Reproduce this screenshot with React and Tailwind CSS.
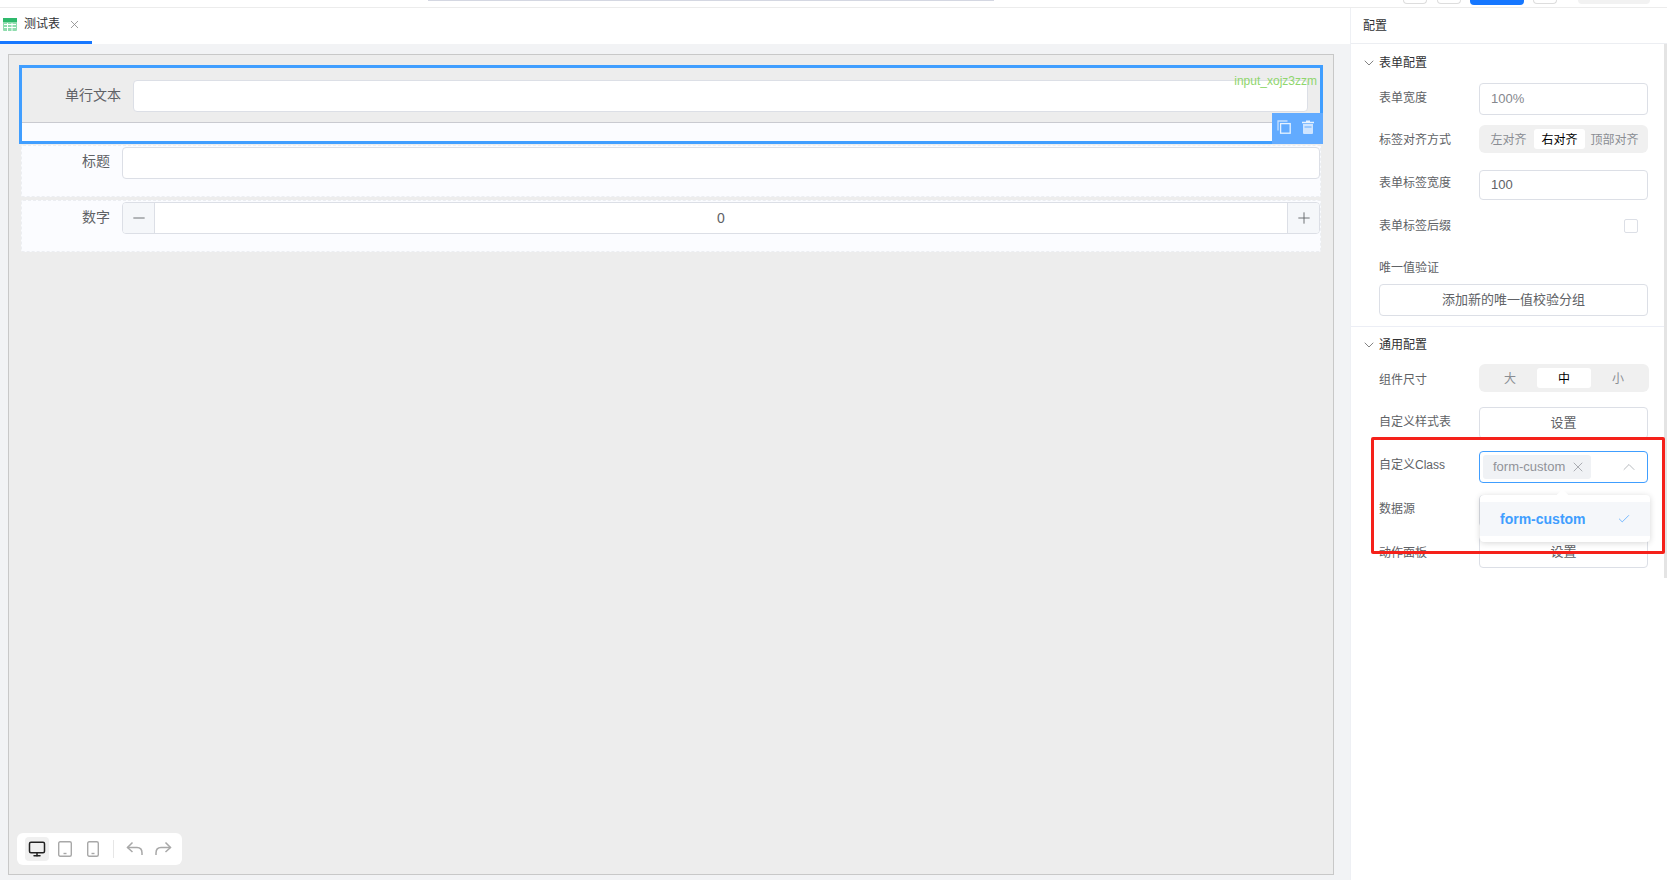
import { ChevronDown, ChevronUp, Check, X, Plus, Minus, Monitor } from "lucide-react";

const font = "font-['Liberation_Sans','Noto_Sans_CJK_SC',sans-serif]";

function SheetIcon() {
  return (
    <svg width="14" height="13" viewBox="0 0 14 13" className="shrink-0">
      <rect x="0" y="0" width="14" height="13" rx="1" fill="#8fdcae" />
      <rect x="0" y="0" width="14" height="4" fill="#2fb96c" />
      <path d="M1 6.5h12M1 9.5h12M4.5 5v8M9 5v8" stroke="#fff" strokeWidth="1" />
    </svg>
  );
}

function CopyIcon() {
  return (
    <svg width="14" height="14" viewBox="0 0 14 14" fill="none" stroke="#e6f2ff" strokeWidth="1.3">
      <rect x="3.6" y="3.6" width="9.6" height="9.6" />
      <path d="M1 10.5V1h9.5" opacity="0.75" />
    </svg>
  );
}

function TrashIcon() {
  return (
    <svg width="12" height="14" viewBox="0 0 12 14">
      <path d="M4 0.5h4v1.2h4v1.5H0V1.7h4z" fill="#e6f2ff" />
      <path d="M1 4h10v9a1 1 0 0 1-1 1H2a1 1 0 0 1-1-1z" fill="#cfe5ff" />
      <path d="M2.5 7h7" stroke="#62abff" strokeWidth="1" />
    </svg>
  );
}

function DeviceIcon({ w, className = "" }) {
  return (
    <svg width={w} height="16" viewBox={`0 0 ${w} 16`} fill="none" stroke="#a8a8a8" strokeWidth="1.4" className={className}>
      <rect x="0.7" y="0.7" width={w - 1.4} height="14.6" rx="1.5" />
      <path d={`M${w / 2 - 1.5} 12.5h3`} />
    </svg>
  );
}

function UndoIcon({ flip, className = "" }) {
  return (
    <svg width="18" height="16" viewBox="0 0 18 16" fill="none" stroke="#a8a8a8" strokeWidth="1.5" className={`${flip ? "-scale-x-100" : ""} ${className}`}>
      <path d="M6.5 1.5 1.5 6.5l5 4.5" />
      <path d="M1.5 6.5H11c3.2 0 5 2.2 5 5.5v2" />
    </svg>
  );
}

function Row({ label, className = "", labelClass = "", children }) {
  return (
    <div className={`flex items-center pl-[28px] pr-[19px] ${className}`}>
      <span className={`w-[100px] shrink-0 text-[12px] text-[#606266] ${labelClass}`}>{label}</span>
      <div className="flex-1">{children}</div>
    </div>
  );
}

function Field({ value, h = "h-[32px]", muted }) {
  return (
    <div className={`${h} flex items-center rounded border border-[#dcdfe6] bg-white px-[11px] text-[13px] ${muted ? "text-[#85888e]" : "text-[#606266]"}`}>
      {value}
    </div>
  );
}

function Segmented({ items, active, cols }) {
  return (
    <div className={`grid h-[28px] items-center rounded-[6px] bg-[#f0f0f0] px-[4px] ${cols}`}>
      {items.map((item) => (
        <span
          key={item}
          className={`flex h-[20px] items-center justify-center rounded-[3px] pt-[2px] text-[12px] whitespace-nowrap ${item === active ? "bg-white text-black" : "text-[#8a8d93]"}`}
        >
          {item}
        </span>
      ))}
    </div>
  );
}

function SectionTitle({ title, className = "" }) {
  return (
    <div className={`flex h-[20px] items-center pl-[10px] text-[12px] text-[#303133] ${className}`}>
      <ChevronDown size={16} strokeWidth={1.1} className="mr-[2px] text-[#555]" />
      {title}
    </div>
  );
}

function CanvasRow({ label, className = "", labelClass = "", children }) {
  return (
    <div className={`mx-[2px] h-[52px] rounded-[2px] border border-dashed border-[#eceef2] bg-[#fbfcff] pt-px ${className}`}>
      <div className="flex items-start">
        <span className={`w-[88px] text-right text-[14px] leading-[24px] text-[#606266] ${labelClass}`}>{label}</span>
        <div className="ml-[12px] flex-1">{children}</div>
      </div>
    </div>
  );
}

export default function App() {
  return (
    <div className={`flex h-[880px] w-[1667px] flex-col overflow-hidden bg-white ${font}`}>
      {/* cropped top toolbar */}
      <div className="relative h-[8px] shrink-0 border-b border-[#ececec]">
        <div className="absolute top-0 left-[428px] h-px w-[566px] bg-[#d4d7e2]" />
        <div className="absolute top-0 left-[1403px] h-[4px] w-[24px] rounded-b border border-t-0 border-[#ddd]" />
        <div className="absolute top-0 left-[1437px] h-[4px] w-[24px] rounded-b border border-t-0 border-[#ddd]" />
        <div className="absolute top-0 left-[1470px] h-[5px] w-[54px] rounded-b bg-[#1677ff]" />
        <div className="absolute top-0 left-[1533px] h-[4px] w-[24px] rounded-b border border-t-0 border-[#ddd]" />
        <div className="absolute top-0 left-[1578px] h-[4px] w-[72px] rounded-b bg-[#f2f2f2]" />
      </div>

      <div className="flex min-h-0 flex-1">
        {/* left: tab + canvas */}
        <div className="flex min-w-0 flex-1 flex-col">
          <div className="h-[36px] shrink-0 bg-white">
            <div className="flex h-[36px] w-[92px] items-center border-b-[3px] border-[#1677ff] pb-px pl-[3px]">
              <SheetIcon />
              <span className="ml-[7px] text-[12px] text-[#303133]">测试表</span>
              <X size={13} strokeWidth={1.5} className="ml-[8px] text-[#888]" />
            </div>
          </div>
          <div className="flex min-h-0 flex-1 flex-col bg-[#f2f3f5] pt-[10px] pr-[16px] pb-[5px] pl-[8px]">
            <div className="relative flex-1 border border-[#c8c8c8] bg-[#ededed] px-[10px] pt-[10px]">
              {/* selected field */}
              <div className="relative h-[79px] border-[3px] border-[#409eff]">
                <div className="flex h-[55px] border-b border-[#c9cad0] bg-[#ededed] pt-[12px] pr-[12px]">
                  <span className="w-[99px] pt-[3px] text-right text-[14px] leading-[24px] text-[#606266]">单行文本</span>
                  <div className="ml-[12px] h-[32px] flex-1 rounded border border-[#dcdfe6] bg-white" />
                </div>
                <div className="h-[18px] bg-[#fbfcff]" />
                <span className="absolute top-[6px] right-[3px] text-[12px] leading-[14px] text-[#8fd66d]">input_xojz3zzm</span>
                <div className="absolute right-[-3px] bottom-[-3px] flex h-[31px] w-[51px] items-start gap-[11px] bg-[#62abff] pt-[7px] pl-[5px]">
                  <CopyIcon />
                  <TrashIcon />
                </div>
              </div>

              <CanvasRow label="标题" className="mt-px" labelClass="pt-[2px]">
                <div className="h-[32px] rounded border border-[#dcdfe6] bg-white" />
              </CanvasRow>
              <CanvasRow label="数字" className="mt-[3px]" labelClass="pt-[3px]">
                <div className="flex h-[32px] overflow-hidden rounded border border-[#dcdfe6] bg-white text-[#606266]">
                  <span className="flex w-[32px] items-center justify-center border-r border-[#dcdfe6] bg-[#f5f7fa]">
                    <Minus size={18} strokeWidth={1.2} />
                  </span>
                  <span className="flex flex-1 items-center justify-center text-[14px]">0</span>
                  <span className="flex w-[32px] items-center justify-center border-l border-[#dcdfe6] bg-[#f5f7fa]">
                    <Plus size={18} strokeWidth={1.2} />
                  </span>
                </div>
              </CanvasRow>

              {/* device toolbar */}
              <div className="absolute bottom-[9px] left-[8px] flex h-[32px] w-[165px] items-center rounded-[6px] bg-white pl-[8px]">
                <span className="flex h-[24px] w-[24px] items-center justify-center rounded-[4px] bg-[#f0f0f0] text-[#222]">
                  <Monitor size={18} strokeWidth={2} />
                </span>
                <DeviceIcon w={14} className="ml-[9px]" />
                <DeviceIcon w={12} className="ml-[15px]" />
                <span className="mr-[12px] ml-[14px] h-[18px] w-px bg-[#e6e6e6]" />
                <UndoIcon />
                <UndoIcon flip className="ml-[10px]" />
              </div>
            </div>
          </div>
        </div>

        {/* right: config panel */}
        <div className="relative w-[317px] shrink-0 border-l border-[#eef0f4] bg-white">
          <div className="flex h-[36px] items-center border-b border-[#eceef2] pl-[12px] text-[12px] text-[#303133]">配置</div>
          <div className="absolute top-[36px] right-0 h-[534px] w-[3px] bg-[#e4e4e4]" />

          <SectionTitle title="表单配置" className="mt-[9px]" />
          <Row label="表单宽度" className="mt-[10px]" labelClass="pb-[2px]">
            <Field value="100%" muted />
          </Row>
          <Row label="标签对齐方式" className="mt-[10px]" labelClass="pt-[2px]">
            <Segmented items={["左对齐", "右对齐", "顶部对齐"]} active="右对齐" cols="grid-cols-[51px_51px_59px]" />
          </Row>
          <Row label="表单标签宽度" className="mt-[17px]" labelClass="pb-[4px]">
            <Field value="100" h="h-[30px]" />
          </Row>
          <div className="mt-[19px] flex h-[14px] items-center pr-[29px] pl-[28px]">
            <span className="flex-1 text-[12px] text-[#606266]">表单标签后缀</span>
            <span className="h-[14px] w-[14px] rounded-[2px] border border-[#dcdfe6]" />
          </div>
          <div className="mt-[27px] pl-[28px] text-[12px] leading-[16px] text-[#606266]">唯一值验证</div>
          <div className="mt-[8px] mr-[19px] ml-[28px] flex h-[32px] items-center justify-center rounded border border-[#dcdfe6] text-[13px] text-[#606266]">
            添加新的唯一值校验分组
          </div>
          <div className="mt-[10px] h-px bg-[#eceef5]" />

          <SectionTitle title="通用配置" className="mt-[8px]" />
          <Row label="组件尺寸" className="mt-[9px]" labelClass="pt-[4px]">
            <Segmented items={["大", "中", "小"]} active="中" cols="grid-cols-[54px_54px_54px]" />
          </Row>
          <Row label="自定义样式表" className="mt-[15px]" labelClass="pb-[3px]">
            <div className="flex h-[32px] items-center justify-center rounded border border-[#dcdfe6] text-[13px] text-[#606266]">设置</div>
          </Row>
          <Row label="自定义Class" className="mt-[12px]" labelClass="pb-[4px]">
            <div className="flex h-[32px] items-center rounded border border-[#409eff] pr-[8px] pl-[3px]">
              <span className="flex h-[24px] items-center rounded-[3px] bg-[#f0f2f5] pr-[5px] pl-[10px] text-[13px] text-[#909399]">
                form-custom
                <X size={16} strokeWidth={1.1} className="ml-[5px]" />
              </span>
              <ChevronUp size={20} strokeWidth={1.1} className="ml-auto text-[#b0b3b8]" />
            </div>
          </Row>
          <Row label="数据源" className="mt-[12px]" labelClass="pb-[4px]">
            <div className="h-[32px] rounded border border-[#dcdfe6]" />
          </Row>
          <Row label="动作面板" className="mt-[9px]" labelClass="pt-[2px]">
            <div className="flex h-[32px] items-center justify-center rounded border border-[#dcdfe6] text-[13px] text-[#606266]">设置</div>
          </Row>

          {/* dropdown popup */}
          <div className="absolute top-[487px] left-[129px] h-[47px] w-[170px] rounded-[4px] bg-white pt-[7px] shadow-[0_1px_6px_rgba(0,0,0,0.16)]">
            <div className="absolute top-[-4px] left-[78px] h-[9px] w-[9px] rotate-45 bg-white" />
            <div className="relative flex h-[34px] items-center bg-[#f5f7fa] pr-[19px] pl-[20px] text-[14px] font-bold text-[#409eff]">
              form-custom
              <Check size={14} strokeWidth={1.2} className="ml-auto" />
            </div>
          </div>

          {/* red annotation */}
          <div className="absolute top-[429px] left-[20px] h-[117px] w-[294px] rounded-[2px] border-[3px] border-[#f5211a]" />
        </div>
      </div>
    </div>
  );
}
